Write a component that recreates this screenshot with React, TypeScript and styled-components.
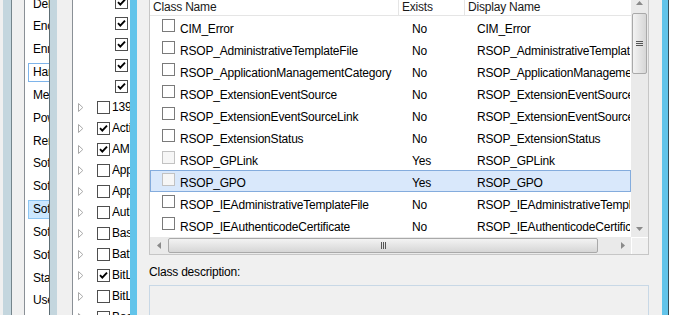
import React from 'react';
import styled, { createGlobalStyle, css } from 'styled-components';

const GlobalStyle = createGlobalStyle`
  html, body {
    margin: 0;
    padding: 0;
    background: #ffffff;
  }
  body {
    font-family: "Segoe UI", "Liberation Sans", Arial, sans-serif;
    font-size: 12px;
    letter-spacing: -0.2px;
    color: #000;
  }
  * { box-sizing: border-box; }
`;

const frame = '#c4d6de';
const cyan = '#62c4ea';

type ItemState = 'none' | 'focus' | 'selected';

const settingsItems: { label: string; state: ItemState }[] = [
  { label: 'Delegation', state: 'none' },
  { label: 'Encryption', state: 'none' },
  { label: 'Enrollment', state: 'none' },
  { label: 'Hardware', state: 'focus' },
  { label: 'Messages', state: 'none' },
  { label: 'Power', state: 'none' },
  { label: 'Remote', state: 'none' },
  { label: 'Software', state: 'none' },
  { label: 'Software', state: 'none' },
  { label: 'Software', state: 'selected' },
  { label: 'Software', state: 'none' },
  { label: 'Software', state: 'none' },
  { label: 'Startup', state: 'none' },
  { label: 'User', state: 'none' },
];

type TreeNode = { label: string; depth: 0 | 1; checked: boolean; expandable?: boolean };

const treeNodes: TreeNode[] = [
  { label: 'Allow', depth: 1, checked: true },
  { label: 'Allow', depth: 1, checked: true },
  { label: 'Allow', depth: 1, checked: true },
  { label: 'Allow', depth: 1, checked: true },
  { label: 'Allow', depth: 1, checked: true },
  { label: '1394 Bus', depth: 0, checked: false, expandable: true },
  { label: 'Active Directory', depth: 0, checked: true, expandable: true },
  { label: 'AMD', depth: 0, checked: true, expandable: true },
  { label: 'AppID', depth: 0, checked: false, expandable: true },
  { label: 'AppLocker', depth: 0, checked: false, expandable: true },
  { label: 'Authentication', depth: 0, checked: false, expandable: true },
  { label: 'Base', depth: 0, checked: false, expandable: true },
  { label: 'Battery', depth: 0, checked: false, expandable: true },
  { label: 'BitLocker', depth: 0, checked: true, expandable: true },
  { label: 'BitLocker Network', depth: 0, checked: false, expandable: true },
  { label: 'Boot', depth: 0, checked: false, expandable: true },
];

type WmiClass = { name: string; exists: boolean; selected?: boolean };

const wmiClasses: WmiClass[] = [
  { name: 'CIM_Error', exists: false },
  { name: 'RSOP_AdministrativeTemplateFile', exists: false },
  { name: 'RSOP_ApplicationManagementCategory', exists: false },
  { name: 'RSOP_ExtensionEventSource', exists: false },
  { name: 'RSOP_ExtensionEventSourceLink', exists: false },
  { name: 'RSOP_ExtensionStatus', exists: false },
  { name: 'RSOP_GPLink', exists: true },
  { name: 'RSOP_GPO', exists: true, selected: true },
  { name: 'RSOP_IEAdministrativeTemplateFile', exists: false },
  { name: 'RSOP_IEAuthenticodeCertificate', exists: false },
  { name: 'RSOP_IEConnectionDialUpCredentials', exists: false },
];

export default function App() {
  return (
    <>
      <GlobalStyle />
      <Desktop>
        <BackEdge />

        <SettingsWindow>
          <SettingsList>
            {settingsItems.map((item, i) => (
              <SettingsItem key={i} $state={item.state}>
                {item.label}
              </SettingsItem>
            ))}
          </SettingsList>
        </SettingsWindow>

        <PolicyWindow>
          <PolicyContent>
            <TreeView>
              {treeNodes.map((node, i) => (
                <TreeRow key={i} $depth={node.depth}>
                  <Expander>
                    {node.expandable && (
                      <svg width="6" height="9" viewBox="0 0 6 9">
                        <path d="M0.5 0.5 L4.8 4.5 L0.5 8.5 Z" fill="none" stroke="#a8a8a8" strokeWidth="1" />
                      </svg>
                    )}
                  </Expander>
                  <TreeCheck>{node.checked && <CheckMark />}</TreeCheck>
                  <TreeLabel>{node.label}</TreeLabel>
                </TreeRow>
              ))}
            </TreeView>
          </PolicyContent>
        </PolicyWindow>

        <Dialog>
          <ClassList>
            <ListPane>
              <HeaderRow>
                <HeaderCell $width={249}>Class Name</HeaderCell>
                <HeaderCell $width={66}>Exists</HeaderCell>
                <HeaderCell>Display Name</HeaderCell>
              </HeaderRow>
              {wmiClasses.map((c) => (
                <ClassRow key={c.name} $selected={c.selected}>
                  <NameCell>
                    <ClassCheck $disabled={c.exists} />
                    <span>{c.name}</span>
                  </NameCell>
                  <ExistsCell>{c.exists ? 'Yes' : 'No'}</ExistsCell>
                  <DisplayCell>{c.name}</DisplayCell>
                </ClassRow>
              ))}
            </ListPane>

            <VScroll>
              <ScrollButton>
                <svg width="7" height="4" viewBox="0 0 7 4">
                  <path d="M0 4 L3.5 0 L7 4 Z" fill="#8a8a8a" />
                </svg>
              </ScrollButton>
              <VThumb>
                <svg width="7" height="5" viewBox="0 0 7 5">
                  <path d="M0 0.5 H7 M0 2.5 H7 M0 4.5 H7" stroke="#555" strokeWidth="1" />
                </svg>
              </VThumb>
              <Track />
              <ScrollButton>
                <svg width="7" height="4" viewBox="0 0 7 4">
                  <path d="M0 0 L3.5 4 L7 0 Z" fill="#8a8a8a" />
                </svg>
              </ScrollButton>
            </VScroll>

            <HScroll>
              <ScrollButton>
                <svg width="4" height="7" viewBox="0 0 4 7">
                  <path d="M4 0 L0 3.5 L4 7 Z" fill="#8a8a8a" />
                </svg>
              </ScrollButton>
              <HThumb>
                <svg width="5" height="7" viewBox="0 0 5 7">
                  <path d="M0.5 0 V7 M2.5 0 V7 M4.5 0 V7" stroke="#555" strokeWidth="1" />
                </svg>
              </HThumb>
              <Track />
              <ScrollButton>
                <svg width="4" height="7" viewBox="0 0 4 7">
                  <path d="M0 0 L4 3.5 L0 7 Z" fill="#8a8a8a" />
                </svg>
              </ScrollButton>
            </HScroll>

            <ScrollCorner />
          </ClassList>

          <FieldLabel>Class description:</FieldLabel>
          <DescriptionBox />
        </Dialog>
      </Desktop>
    </>
  );
}

function CheckMark() {
  return (
    <svg width="11" height="11" viewBox="0 0 11 11">
      <path d="M2 5.2 L4.3 7.6 L9 2.6" fill="none" stroke="#000" strokeWidth="1.9" />
    </svg>
  );
}

const Desktop = styled.div`
  display: flex;
  width: 696px;
  height: 315px;
  overflow: hidden;
  background: #ffffff;
`;

const BackEdge = styled.div`
  flex: none;
  width: 12px;
  background: linear-gradient(to right, #f0f0f0 3px, ${frame} 3px);
  border-right: 1px solid #75858c;
`;

const SettingsWindow = styled.div`
  flex: none;
  width: 37px;
  padding-left: 12px;
  background: #f0f0f0;
  overflow: hidden;
`;

const SettingsList = styled.div`
  display: flex;
  flex-direction: column;
  gap: 3.85px;
  width: 100%;
  height: 100%;
  padding: 0 0 0 3px;
  background: #fff;
  border-left: 1px solid #8a9096;
  & > :first-child {
    margin-top: -5.5px;
  }
`;

const SettingsItem = styled.div<{ $state: ItemState }>`
  flex: none;
  height: 19px;
  margin-right: -4px;
  line-height: 17px;
  padding-left: 4px;
  border: 1px solid transparent;
  white-space: nowrap;
  overflow: hidden;
  ${(p) =>
    p.$state === 'focus' &&
    css`
      border-color: #7eb4ea;
    `}
  ${(p) =>
    p.$state === 'selected' &&
    css`
      background: #cce8ff;
      border-color: #8ec6f2;
    `}
`;

const PolicyWindow = styled.div`
  flex: none;
  width: 81px;
  padding-left: 7px;
  background: ${frame};
  border-left: 1px solid #5d6d74;
  overflow: hidden;
`;

const PolicyContent = styled.div`
  height: 100%;
  padding-left: 15px;
  background: #f0f0f0;
`;

const TreeView = styled.div`
  display: flow-root;
  width: 100%;
  height: 100%;
  overflow: hidden;
  background: #fff;
  border-left: 1px solid #8a9096;
  & > :first-child {
    margin-top: -8.5px;
  }
`;

const TreeRow = styled.div<{ $depth: number }>`
  display: flex;
  align-items: center;
  height: 21px;
  padding-left: ${(p) => 3 + p.$depth * 18}px;
  white-space: nowrap;
  overflow: hidden;
`;

const Expander = styled.span`
  display: flex;
  align-items: center;
  flex: none;
  width: 21px;
  padding-left: 2px;
`;

const TreeCheck = styled.span`
  display: flex;
  align-items: center;
  justify-content: center;
  flex: none;
  width: 13px;
  height: 13px;
  border: 1px solid #4e4e4e;
  background: #fff;
`;

const TreeLabel = styled.span`
  flex: 1;
  min-width: 0;
  margin-left: 2px;
  line-height: 21px;
  overflow: hidden;
`;

const Dialog = styled.div`
  flex: none;
  width: 538px;
  padding: 0 13px 0 12px;
  background: #f0f0f0;
  border-left: 7px solid ${cyan};
  border-right: 6px solid ${cyan};
  box-shadow: 1px 0 0 #34505c;
`;

const ClassList = styled.div`
  display: grid;
  grid-template-columns: 481px 17px;
  grid-template-rows: 243px 17px;
  width: 500px;
  margin-top: -7px;
  border: 1px solid #c6c6c6;
  background: #fff;
`;

const ListPane = styled.div`
  overflow: hidden;
  background: #fff;
`;

const HeaderRow = styled.div`
  display: flex;
  height: 22px;
  border-bottom: 1px solid #e5e5e5;
`;

const HeaderCell = styled.div<{ $width?: number }>`
  flex: ${(p) => (p.$width ? 'none' : '1')};
  width: ${(p) => (p.$width ? `${p.$width}px` : 'auto')};
  padding: 5px 0 0 3px;
  line-height: 16px;
  color: #1a1a1a;
  white-space: nowrap;
  border-right: ${(p) => (p.$width ? '1px solid #e5e5e5' : 'none')};
`;

const ClassRow = styled.div<{ $selected?: boolean }>`
  display: flex;
  align-items: flex-start;
  height: 22px;
  border: 1px solid transparent;
  white-space: nowrap;
  ${(p) =>
    p.$selected &&
    css`
      background: #d9e8fb;
      border-color: #84acdd;
    `}
`;

const cellText = css`
  padding-top: 4px;
  line-height: 16px;
  overflow: hidden;
`;

const NameCell = styled.div`
  display: flex;
  align-items: flex-start;
  gap: 5px;
  flex: none;
  width: 248px;
  padding-left: 11px;
  ${cellText}
`;

const ClassCheck = styled.span<{ $disabled?: boolean }>`
  flex: none;
  width: 13px;
  height: 13px;
  margin-top: -2px;
  border: 1px solid ${(p) => (p.$disabled ? '#c2c2c2' : '#7a7a7a')};
  background: ${(p) => (p.$disabled ? '#f6f6f6' : '#fff')};
`;

const ExistsCell = styled.div`
  flex: none;
  width: 66px;
  padding-left: 13px;
  ${cellText}
`;

const DisplayCell = styled.div`
  flex: 1;
  min-width: 0;
  padding-left: 12px;
  ${cellText}
`;

const VScroll = styled.div`
  display: flex;
  flex-direction: column;
  background: #eaeaea;
`;

const HScroll = styled.div`
  display: flex;
  background: #eaeaea;
`;

const ScrollButton = styled.div`
  display: flex;
  align-items: center;
  justify-content: center;
  flex: none;
  width: 17px;
  height: 17px;
`;

const Track = styled.div`
  flex: 1;
`;

const thumb = css`
  display: flex;
  align-items: center;
  justify-content: center;
  flex: none;
  border: 1px solid #a9a9a9;
  border-radius: 2px;
`;

const VThumb = styled.div`
  ${thumb}
  width: 15px;
  height: 61px;
  margin: 2px 0 0 1px;
  background: linear-gradient(to right, #f3f3f3, #d6d6d6);
`;

const HThumb = styled.div`
  ${thumb}
  width: 430px;
  height: 15px;
  margin: 1px 0 0 1px;
  background: linear-gradient(to bottom, #f3f3f3, #d6d6d6);
`;

const ScrollCorner = styled.div`
  background: #f0f0f0;
  border-top: 1px solid #fff;
  border-left: 1px solid #fff;
`;

const FieldLabel = styled.div`
  margin-top: 9px;
  line-height: 16px;
`;

const DescriptionBox = styled.div`
  width: 500px;
  height: 60px;
  margin-top: 5px;
  border: 1px solid #c8d8e6;
  background: #f0f0f0;
`;
